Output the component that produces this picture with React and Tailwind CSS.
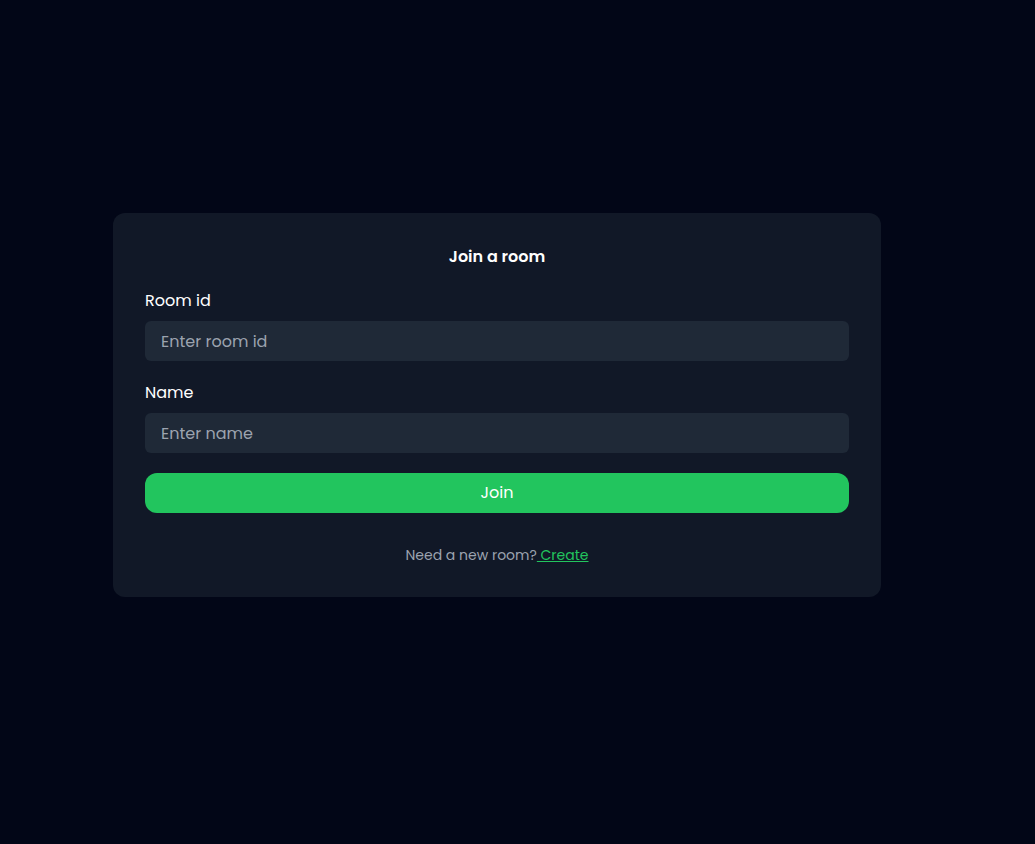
import React, { useState } from "react";

const JoinRoom = () => {
  const [roomId, setRoomId] = useState("");
  const [name, setName] = useState("");

  return (
    <div className="w-[768px] bg-[#111827] rounded-xl p-8">
      <h2 className="text-base font-semibold text-white text-center mb-5">Join a room</h2>
      <label className="block text-base text-white mb-2">Room id</label>
      <input
        value={roomId}
        onChange={(e) => setRoomId(e.target.value)}
        placeholder="Enter room id"
        className="w-full h-10 px-4 rounded-md bg-[#1f2937] text-white placeholder-[#9ca3af] outline-none"
      />
      <label className="block text-base text-white mt-5 mb-2">Name</label>
      <input
        value={name}
        onChange={(e) => setName(e.target.value)}
        placeholder="Enter name"
        className="w-full h-10 px-4 rounded-md bg-[#1f2937] text-white placeholder-[#9ca3af] outline-none"
      />
      <button className="w-full h-10 mt-5 rounded-xl bg-[#22c55e] text-white text-base">
        Join
      </button>
      <p className="mt-8 text-sm text-[#9ca3af] text-center">
        Need a new room?
        <a href="#" className="text-[#22c55e] underline"> Create</a>
      </p>
    </div>
  );
};

export default function App() {
  return (
    <div className="min-h-screen bg-[#020617] pl-[113px] pt-[213px] font-['Poppins','Inter',sans-serif]">
      <JoinRoom />
    </div>
  );
}
